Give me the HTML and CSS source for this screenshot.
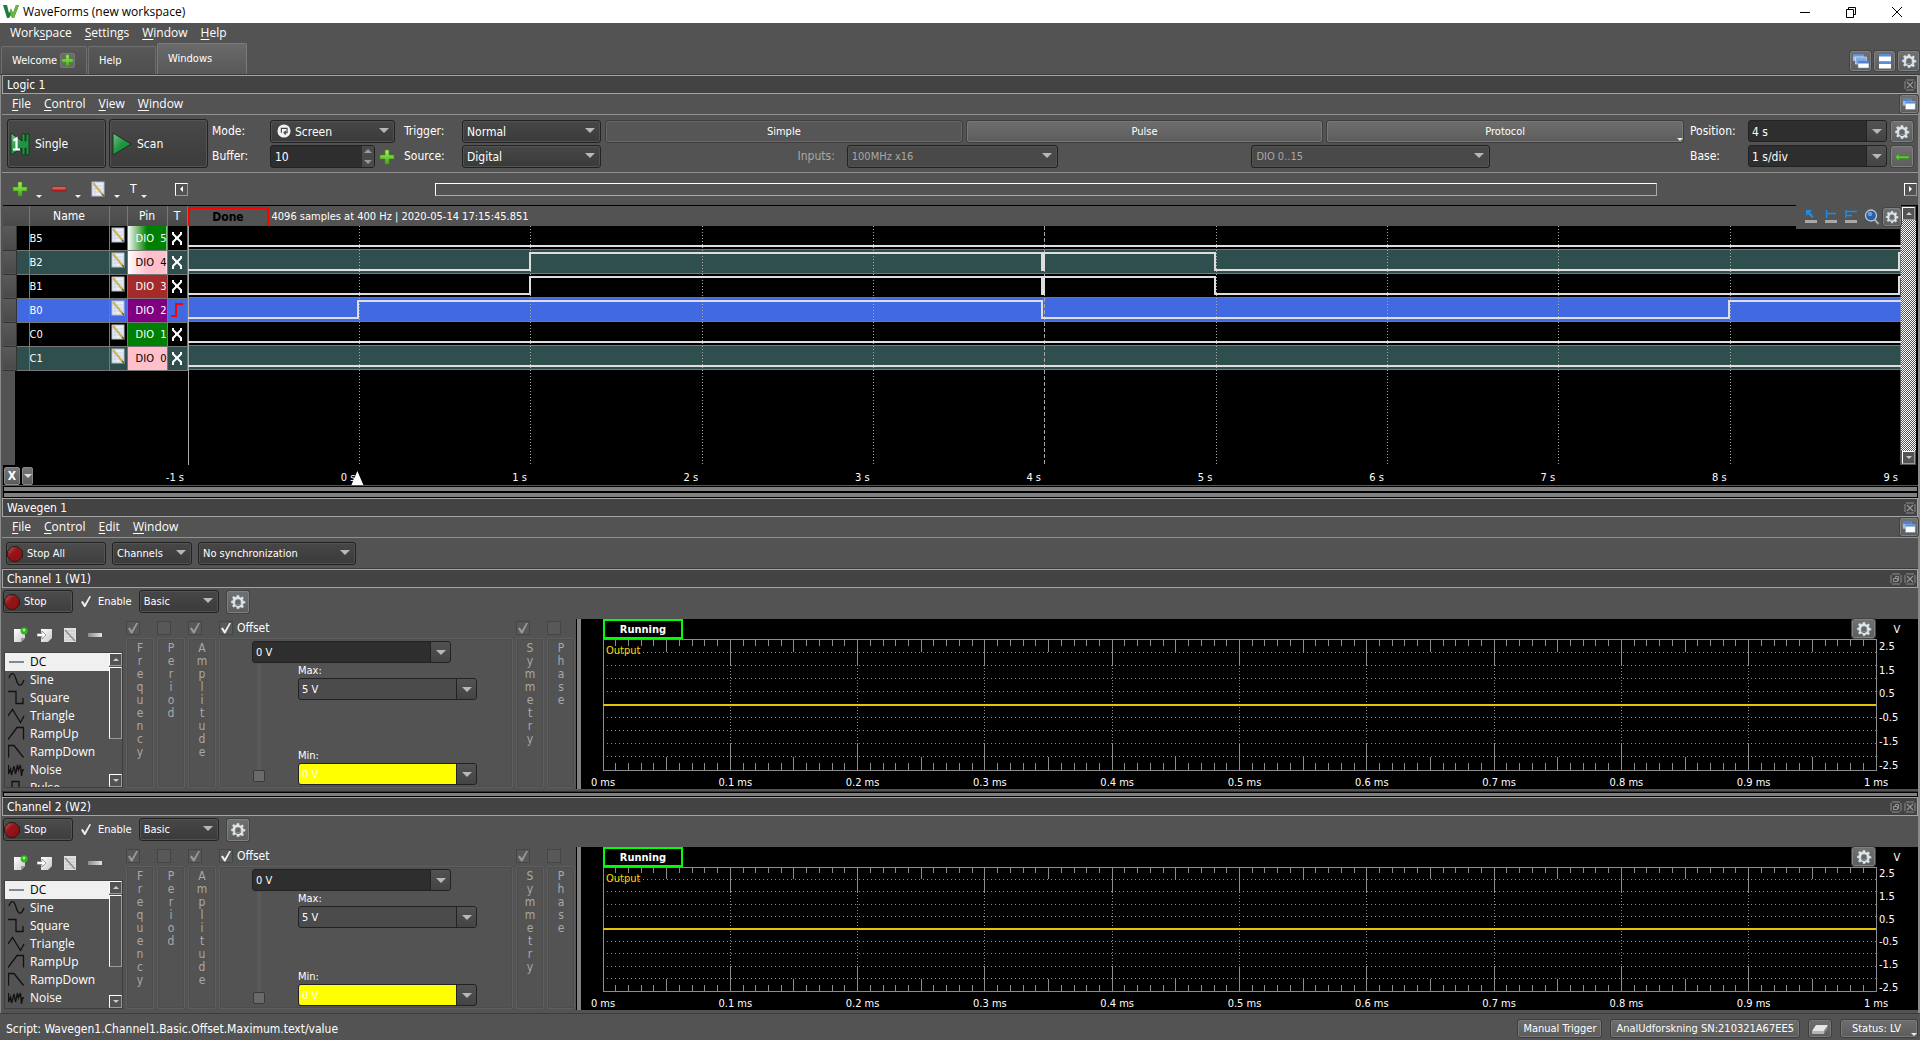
FILE: index.html
```html
<!DOCTYPE html>
<html lang="en">
<head>
<meta charset="utf-8">
<title>WaveForms (new workspace)</title>
<link rel="stylesheet" href="styles.css">
</head>
<body>
<svg class="sprite" aria-hidden="true">
  <defs>
    <linearGradient id="gGreen" x1="0" y1="0" x2="0" y2="1"><stop offset="0" stop-color="#a8f060"/><stop offset="1" stop-color="#3fae12"/></linearGradient>
    <linearGradient id="gRed" x1="0" y1="0" x2="0" y2="1"><stop offset="0" stop-color="#f08080"/><stop offset="1" stop-color="#b01010"/></linearGradient>
    <linearGradient id="gGrey" x1="0" y1="0" x2="1" y2="1"><stop offset="0" stop-color="#ffffff"/><stop offset="1" stop-color="#c8c8c8"/></linearGradient>
    <linearGradient id="gBar" x1="0" y1="0" x2="1" y2="0"><stop offset="0" stop-color="#8a8a8a"/><stop offset="1" stop-color="#e4e4e4"/></linearGradient>
    <linearGradient id="gPlay" x1="0" y1="0" x2="1" y2="1"><stop offset="0" stop-color="#7dc08a"/><stop offset=".5" stop-color="#1f9440"/><stop offset="1" stop-color="#1f9440"/></linearGradient>
    <linearGradient id="gStop" x1="0" y1="0" x2="1" y2="1"><stop offset="0" stop-color="#c86060"/><stop offset=".4" stop-color="#961418"/><stop offset="1" stop-color="#8a0f14"/></linearGradient>
    <linearGradient id="gWin" x1="0" y1="0" x2="0" y2="1"><stop offset="0" stop-color="#4f83cc"/><stop offset=".35" stop-color="#9fbfe8"/><stop offset=".4" stop-color="#ffffff"/><stop offset="1" stop-color="#e6eefa"/></linearGradient>
  </defs>
  <symbol id="plus" viewBox="0 0 16 16"><path d="M6 1h4v5h5v4h-5v5H6v-5H1V6h5z" fill="url(#gGreen)" stroke="#3a8a18" stroke-width=".6"/></symbol>
  <symbol id="minus" viewBox="0 0 16 16"><rect x="1" y="6" width="14" height="4" rx="1" fill="url(#gRed)" stroke="#8a1010" stroke-width=".5"/></symbol>
  <symbol id="note" viewBox="0 0 16 16"><rect x="2" y="1" width="12" height="14" fill="#e8eef8" stroke="#b4bccb"/><path d="M3 5h10M3 8h10M3 11h10M5 2v12" stroke="#b8c8e4" stroke-width=".7"/><path d="M3 2l10 12" stroke="#d0b050" stroke-width="2"/><path d="M12 13l2 2" stroke="#555" stroke-width="1.2"/></symbol>
  <symbol id="gear" viewBox="0 0 16 16"><path fill-rule="evenodd" fill="#dfe5e8" stroke="#7c8a92" stroke-width=".4" d="M6.900 1h2.200l.4 1.900 1.300.5 1.600-1 1.500 1.500-1 1.700.5 1.200 1.900.4v2.100l-1.900.5-.5 1.200 1 1.700-1.500 1.500-1.600-1-1.300.5L9.100 15H6.900l-.4-1.900-1.300-.5-1.600 1-1.500-1.500 1-1.700-.5-1.200L1 9V7l1.600-.5.5-1.200-1-1.700 1.500-1.500 1.600 1 1.300-.5zM8 5.200a2.800 2.800 0 1 0 0 5.600 2.800 2.800 0 0 0 0-5.600z"/><path d="M5 9.500a3.200 3.200 0 0 0 6 0" fill="none" stroke="#4a6068" stroke-width=".9"/></symbol>
  <symbol id="cascade" viewBox="0 0 16 16"><rect x="0" y="1" width="11" height="7" fill="url(#gWin)"/><path d="M0 1h11v7H0z" fill="#5b8bd0" opacity=".55"/><rect x="2.500" y="4" width="11" height="7" fill="#86abdf" stroke="#dfe9f8" stroke-width=".6"/><rect x="5" y="8" width="11" height="7" fill="#fff" stroke="#6a95d0" stroke-width=".6"/><rect x="5" y="8" width="11" height="2.500" fill="#4f83cc"/></symbol>
  <symbol id="tile" viewBox="0 0 16 16"><rect x="2" y="1" width="12" height="7" fill="#fff"/><rect x="2" y="1" width="12" height="2.500" fill="#5b8ed6"/><rect x="2" y="8.500" width="12" height="7" fill="#fff"/><rect x="2" y="8.500" width="12" height="2.500" fill="#5b8ed6"/></symbol>
  <symbol id="windows" viewBox="0 0 16 16"><rect x="1" y="2" width="10" height="8" fill="#9fbce6"/><rect x="1" y="2" width="10" height="2.500" fill="#4f83cc"/><rect x="4" y="5" width="11" height="9" fill="#fff" stroke="#7fa4da" stroke-width=".6"/><rect x="4" y="5" width="11" height="2.500" fill="#5b8ed6"/></symbol>
  <symbol id="close" viewBox="0 0 12 12"><rect x="1" y="1" width="10" height="10" fill="none" stroke="#8c8c8c" stroke-dasharray="8 2" stroke-dashoffset="-1"/><path d="M3 3l6 6M9 3l-6 6" stroke="#949494" stroke-width="1.300"/></symbol>
  <symbol id="float" viewBox="0 0 12 12"><rect x="1" y="1" width="10" height="10" fill="none" stroke="#8c8c8c" stroke-dasharray="8 2" stroke-dashoffset="-1"/><path d="M3.500 5.500h4v3h-4zM5.500 5.500v-2h3v4h-1" fill="none" stroke="#949494"/></symbol>
  <symbol id="stop" viewBox="0 0 16 16"><path d="M5 .7h6L15.300 5v6L11 15.300H5L.7 11V5z" fill="url(#gStop)" stroke="#1c1c1c"/></symbol>
  <symbol id="repeat" viewBox="0 0 16 16"><circle cx="8" cy="8" r="7.500" fill="#f2f2f2"/><path d="M5 10V5h6.500v5H8.500M10 8l-2 2 2 2" fill="none" stroke="#444" stroke-width="1.300"/></symbol>
  <symbol id="arrow" viewBox="0 0 16 16"><path d="M1 8l4-3.500V7h10v2.500H5V12z" fill="#63c43a" stroke="#2e8a18" stroke-width=".5"/></symbol>
  <symbol id="newdoc" viewBox="0 0 16 16"><path d="M2 2h11v9l-4 4H2z" fill="url(#gGrey)"/><path d="M13 11H9v4z" fill="#9a9a9a"/><circle cx="12.200" cy="3.800" r="3.600" fill="#2eb41c"/><circle cx="12" cy="3" r="1.500" fill="#9df08a"/></symbol>
  <symbol id="import" viewBox="0 0 16 16"><path d="M4 2h11v9l-4 4H4z" fill="url(#gGrey)"/><path d="M0 6.500h5V4l4 4-4 4V9.500H0z" fill="#fff" stroke="#777" stroke-width=".7"/></symbol>
  <symbol id="edit" viewBox="0 0 16 16"><path d="M2 1h12v14H2z" fill="#e0e0e0"/><path d="M3 4h10M3 7h10M3 10h10M3 13h10" stroke="#c4c4c4"/><path d="M3 3l10 11" stroke="#8e8e8e" stroke-width="1.500"/></symbol>
  <symbol id="bar" viewBox="0 0 16 16"><rect x="1" y="6" width="14" height="4" fill="url(#gBar)"/></symbol>
  <symbol id="cursor" viewBox="0 0 14 14"><path d="M1 10h12v3H1z" fill="#a8a8a8"/><path d="M2 0h6L6 2l4 5-2 1-4-4-2 2z" fill="#1e8be6"/></symbol>
  <symbol id="meas1" viewBox="0 0 14 14"><path d="M1 10h12v3H1z" fill="#a8a8a8"/><path d="M2.500 0v8M3 3.500h9" stroke="#1e8be6" stroke-width="1.500"/></symbol>
  <symbol id="meas2" viewBox="0 0 14 14"><path d="M1 10h12v3H1z" fill="#a8a8a8"/><path d="M2 0v8M2 1.500h11M2 5.500h6" stroke="#1e8be6" stroke-width="1.500"/></symbol>
  <symbol id="lens" viewBox="0 0 16 16"><path d="M10.500 10.500l4 4.500" stroke="#a8a8a8" stroke-width="2"/><circle cx="7" cy="6.500" r="5.500" fill="#2c5fa8" stroke="#b8c8d8" stroke-width="1.300"/><circle cx="6" cy="5" r="2.300" fill="#6f9cd8"/></symbol>
  <symbol id="eraser" viewBox="0 0 18 12"><path d="M5 2h12l-4 6H1z" fill="#e6e6e6"/><path d="M1 8h12v3H1z" fill="#b4b4b4"/><path d="M13 8l4-6v3l-4 6z" fill="#8a8a8a"/></symbol>
  <symbol id="w-dc" viewBox="0 0 18 18"><path d="M1 9h15" stroke="#4c5c78" stroke-width="1.400"/></symbol>
  <symbol id="w-sine" viewBox="0 0 18 18"><path d="M1 7C3 1 6 1 8 8s5 9 8 1" fill="none" stroke="#111" stroke-width="1.300"/></symbol>
  <symbol id="w-square" viewBox="0 0 18 18"><path d="M0 2.500h8v12h7V9" fill="none" stroke="#111" stroke-width="1.300"/></symbol>
  <symbol id="w-tri" viewBox="0 0 18 18"><path d="M0 9l4.500-6.500 8 13L16 9" fill="none" stroke="#111" stroke-width="1.300"/></symbol>
  <symbol id="w-up" viewBox="0 0 18 18"><path d="M0 14.500L9 2.500h6.500v12" fill="none" stroke="#111" stroke-width="1.300"/></symbol>
  <symbol id="w-down" viewBox="0 0 18 18"><path d="M.5 14.500v-12H6l9.500 12" fill="none" stroke="#111" stroke-width="1.300"/></symbol>
  <symbol id="w-noise" viewBox="0 0 18 18"><path d="M.5 4v9l2-5 1 6L6 5l1.500 8 2-9 1 5 2-5 1 11 1-6h1.500" fill="none" stroke="#111" stroke-width="1.300"/></symbol>
  <symbol id="w-pulse" viewBox="0 0 18 18"><path d="M0 14h4V2.500h7V14h5" fill="none" stroke="#111" stroke-width="1.300"/></symbol>
</svg>

<header class="titlebar">
  <svg class="logo" viewBox="0 0 16 14"><path d="M0 0h4l2 8 2-4 2 4 3-8h3l-5 13H9L8 10l-2 3H4z" fill="#1d7d3c"/><path d="M8 3l2 5 3-8h3l-5 13H9L7 7z" fill="#6db33f"/></svg>
  <span class="grow">WaveForms (new workspace)</span>
  <button class="win" aria-label="Minimize"><svg viewBox="0 0 12 12"><path d="M1 6.500h10" stroke="#000"/></svg></button>
  <button class="win" aria-label="Restore"><svg viewBox="0 0 12 12"><path d="M1.500 3.500h7v8h-7zM3.500 3.500v-2h7v7h-2" fill="none" stroke="#000"/></svg></button>
  <button class="win" aria-label="Close"><svg viewBox="0 0 12 12"><path d="M1 1l10 10M11 1L1 11" stroke="#000"/></svg></button>
</header>

<nav class="menu main"><a href="#">Work<u>s</u>pace</a><a href="#"><u>S</u>ettings</a><a href="#"><u>W</u>indow</a><a href="#"><u>H</u>elp</a></nav>

<div class="tabs">
  <button class="tab welcome">Welcome <span class="addtab"><svg><use href="#plus"/></svg></span></button>
  <button class="tab help">Help</button>
  <button class="tab active">Windows</button>
  <span class="grow"></span>
  <button class="tool" aria-label="Cascade"><svg><use href="#cascade"/></svg></button>
  <button class="tool" aria-label="Tile"><svg><use href="#tile"/></svg></button>
  <button class="tool" aria-label="Settings"><svg><use href="#gear"/></svg></button>
</div>

<main class="workspace">
  <section class="logic">
    <h2 class="dock"><span class="grow">Logic 1</span><svg><use href="#close"/></svg></h2>
    <nav class="menu"><a href="#"><u>F</u>ile</a><a href="#"><u>C</u>ontrol</a><a href="#"><u>V</u>iew</a><a href="#"><u>W</u>indow</a><span class="grow"></span><button class="tool small" aria-label="Windows"><svg><use href="#windows"/></svg></button></nav>

    <div class="toolbar">
      <button class="run"><svg viewBox="0 0 20 24"><path d="M1 1l11 8V2h3v7l1 0V2h3v21h-3v-7h-1v7h-3v-7L1 23z" fill="url(#gPlay)" stroke="#14381c"/><path d="M3.500 8.500l3-2V17M3 17.500h7" fill="none" stroke="#fff" stroke-width="2.200"/></svg>Single</button>
      <button class="run"><svg viewBox="0 0 20 24"><path d="M1 1l18 11L1 23z" fill="url(#gPlay)" stroke="#14381c"/></svg>Scan</button>
      <div class="stack mode">
        <label for="mode">Mode:</label>
        <span class="pick icon"><svg><use href="#repeat"/></svg><select id="mode"><option>Screen</option></select></span>
        <label for="buffer">Buffer:</label>
        <span class="buffer"><span class="spin"><input id="buffer" value="10"><span class="steps"><button aria-label="Up"></button><button aria-label="Down"></button></span></span><button class="bare" aria-label="Add buffer"><svg><use href="#plus"/></svg></button></span>
      </div>
      <div class="stack trig">
        <label for="trigger">Trigger:</label><span class="pick"><select id="trigger"><option>Normal</option></select></span>
        <label for="source">Source:</label><span class="pick"><select id="source"><option>Digital</option></select></span>
      </div>
      <div class="types">
        <div class="three"><button class="flat on">Simple</button><button class="flat">Pulse</button><button class="flat more">Protocol</button></div>
        <div class="inputs"><label for="inputs">Inputs:</label><span class="pick off"><select id="inputs" disabled><option>100MHz x16</option></select></span><span></span><span class="pick off"><select disabled aria-label="Input pins"><option>DIO 0..15</option></select></span></div>
      </div>
      <div class="stack pos">
        <label for="position">Position:</label><span class="combo"><input id="position" value="4 s"><button aria-label="Choose position"></button></span><button class="tool" aria-label="Settings"><svg><use href="#gear"/></svg></button>
        <label for="base">Base:</label><span class="combo"><input id="base" value="1 s/div"><button aria-label="Choose base"></button></span><button class="tool" aria-label="Back"><svg><use href="#arrow"/></svg></button>
      </div>
    </div>

    <div class="scroller">
      <button class="bare drop" aria-label="Add"><svg><use href="#plus"/></svg></button>
      <button class="bare drop" aria-label="Remove"><svg><use href="#minus"/></svg></button>
      <button class="bare drop" aria-label="Edit"><svg><use href="#note"/></svg></button>
      <button class="bare drop t">T</button>
      <button class="nudge left" aria-label="Scroll left"></button>
      <span class="track"><span class="thumb"></span></span>
      <button class="nudge right" aria-label="Scroll right"></button>
    </div>

    <div class="analyzer">
      <table class="signals">
        <colgroup><col class="c-head"><col class="c-pad"><col class="c-name"><col class="c-note"><col class="c-pin"><col class="c-t"></colgroup>
        <thead><tr><th colspan="2"></th><th>Name</th><th></th><th>Pin</th><th>T</th></tr></thead>
        <tbody id="signals"></tbody>
      </table>
      <div class="view">
        <div class="info"><strong class="state done">Done</strong><span>4096 samples at 400 Hz | 2020-05-14 17:15:45.851</span></div>
        <svg class="waves" id="waves"></svg>
        <div class="overlay">
          <svg><use href="#cursor"/></svg><svg><use href="#meas1"/></svg><svg><use href="#meas2"/></svg><svg class="lens"><use href="#lens"/></svg>
          <button class="tool small" aria-label="Plot settings"><svg><use href="#gear"/></svg></button>
        </div>
      </div>
      <div class="vscroll"><button class="nudge up" aria-label="Scroll up"></button><span class="dither"></span><button class="nudge down" aria-label="Scroll down"></button></div>
    </div>
    <div class="axis"><span class="marks"><button class="x">X</button><button class="xdrop" aria-label="Add cursor"></button></span><svg id="times"></svg></div>
  </section>
  <div class="split"></div>
  <div class="split"></div>

  <section>
    <h2 class="dock"><span class="grow">Wavegen 1</span><svg><use href="#close"/></svg></h2>
    <nav class="menu"><a href="#"><u>F</u>ile</a><a href="#"><u>C</u>ontrol</a><a href="#"><u>E</u>dit</a><a href="#"><u>W</u>indow</a><span class="grow"></span><button class="tool small" aria-label="Windows"><svg><use href="#windows"/></svg></button></nav>
    <div class="genbar">
      <button class="stop all"><svg><use href="#stop"/></svg>Stop All</button>
      <span class="pick channels"><select aria-label="Channels"><option>Channels</option></select></span>
      <span class="pick sync"><select aria-label="Synchronization"><option>No synchronization</option></select></span>
    </div>
    <div id="channels"></div>
  </section>
</main>

<footer class="status">
  <span class="grow">Script: Wavegen1.Channel1.Basic.Offset.Maximum.text/value</span>
  <button class="flat">Manual Trigger</button>
  <button class="flat">AnalUdforskning SN:210321A67EE5</button>
  <button class="flat eraser" aria-label="Clear"><svg><use href="#eraser"/></svg></button>
  <button class="flat more">Status: LV</button>
</footer>
<script src="app.js"></script>
</body>
</html>
```
FILE: styles.css
```css
* { box-sizing: border-box; }
body {
  margin: 0;
  min-height: 100vh;
  display: flex;
  flex-direction: column;
  background: #535353;
  color: #fff;
  font: 12px/16px "DejaVu Sans Condensed", "Noto Sans", sans-serif;
}
button, input, select { font: inherit; color: inherit; margin: 0; padding: 0; border: 0; background: none; min-width: 0; }
svg { display: block; width: 16px; height: 16px; flex: none; }
.sprite { position: absolute; width: 0; height: 0; }
.grow { flex: 1; }
a { color: inherit; text-decoration: none; }
u { text-underline-offset: 2px; }

/* window frame */
.titlebar { display: flex; align-items: center; height: 23px; background: #fff; color: #000; padding: 0 2px 0 3px; gap: 4px; font-family: "Open Sans", sans-serif; }
.titlebar .logo { height: 14px; }
.win { width: 42px; height: 20px; display: grid; place-items: center; }
.win svg { width: 12px; height: 12px; }
.menu { display: flex; align-items: center; gap: 13px; height: 21px; padding-left: 10px; border-bottom: 1px solid #919191; font-family: "Open Sans", sans-serif; }
.menu.main { border: 0; height: 20px; }
.tabs { display: flex; align-items: flex-end; height: 32px; padding: 0 1px; border-bottom: 1px solid #3c3c3c; gap: 1px; }
.tab { display: flex; align-items: center; gap: 3px; height: 28px; padding-left: 10px; border: 1px solid #6e6e6e; border-bottom: 0; border-radius: 2px 2px 0 0; background: linear-gradient(#585858, #4e4e4e); font-size: 11px; }
.welcome { width: 86px; }
.help { width: 68px; }
.tab.active { width: 90px; height: 31px; background: linear-gradient(#6a6a6a, #585858); border-color: #7a7a7a; }
.addtab { background: #6a6a6a; border: 1px solid #777; border-radius: 2px; }
.addtab svg { width: 13px; height: 13px; }
.tool { width: 22px; height: 22px; display: grid; place-items: center; flex: none; border: 1px solid #808080; border-radius: 2px; background: linear-gradient(#707070, #5e5e5e); outline: 1px solid #434343; }
.tabs .tool { width: 21px; height: 20px; margin-bottom: 3px; margin-left: 2px; }
.tool.small { height: 18px; width: 18px; }
.tool.small svg { width: 14px; height: 14px; }
.workspace { flex: 1; border: 1px solid #8a8a8a; border-width: 0 2px 0 1px; padding: 0 0 0 1px; }
.dock { display: flex; align-items: center; gap: 2px; height: 19px; margin: 0; padding: 0 1px 0 4px; border: 1px solid #a4a4a4; background: #434343; font: inherit; }
.dock svg { width: 12px; height: 12px; }

/* shared controls */
.pick { position: relative; display: flex; height: 23px; border: 1px solid #222; border-radius: 3px; background: linear-gradient(#474747, #3a3a3a); box-shadow: inset 0 0 0 1px #525252; }
.pick select { appearance: none; width: 100%; padding: 1px 18px 0 4px; outline: 0; }
.pick::after { content: ""; position: absolute; right: 5px; top: 7px; border: 5px solid transparent; border-top-color: #b8b8b8; border-bottom: 0; pointer-events: none; }
.pick.icon svg { width: 14px; height: 14px; margin: 3px 0 0 6px; }
.pick.off { color: #a8a8a8; background: #494949; }
.pick select:disabled { opacity: 1; color: #a8a8a8; }
.combo { display: flex; height: 22px; border: 1px solid #222; border-radius: 3px; background: #2e2e2e; overflow: hidden; }
.combo input { flex: 1; width: 0; padding: 1px 3px 0; }
.combo button { width: 20px; display: grid; place-items: center; border-left: 1px solid #222; background: linear-gradient(#525252, #444); }
.combo button::after { content: ""; border: 5px solid transparent; border-top-color: #b8b8b8; border-bottom: 0; }
.combo.light { background: #4b4b4b; }
.combo.warn input { background: #ff0; }
.flat { height: 23px; border: 1px solid #3e3e3e; border-radius: 3px; background: linear-gradient(#6e6e6e, #5c5c5c); box-shadow: inset 0 0 0 1px #787878; position: relative; font-size: 11px; }
.flat.on { background: #565656; box-shadow: inset 0 0 0 1px #676767; }
.more::after, .drop::after { content: ""; position: absolute; right: 0; bottom: 1px; border: 3px solid transparent; border-top-color: #eee; border-bottom: 0; }
.bare { display: grid; place-items: center; position: relative; }

/* logic toolbar */
.toolbar { display: flex; gap: 3px; height: 58px; padding: 4px 5px; border-bottom: 1px solid #919191; }
.run { width: 99px; height: 49px; display: flex; align-items: center; gap: 5px; padding-left: 2px; border: 1px solid #222; border-radius: 3px; background: linear-gradient(#484848, #3c3c3c); box-shadow: inset 0 0 0 1px #555; }
.run svg { width: 20px; height: 24px; }
.stack { display: grid; grid-template-rows: 23px 23px; row-gap: 2px; padding-top: 1px; }
.stack label { line-height: 22px; }
.mode { grid-template-columns: 58px 125px; padding-left: 1px; }
.buffer { display: flex; gap: 4px; }
.spin { display: flex; width: 105px; height: 23px; border: 1px solid #222; border-radius: 3px; background: #2e2e2e; }
.spin input { flex: 1; width: 0; padding: 1px 0 0 4px; }
.steps { width: 12px; display: grid; grid-template-rows: 1fr 1fr; background: #4a4a4a; }
.steps button { display: grid; place-items: center; }
.steps button::after { content: ""; border: 4px solid transparent; border-top-color: #999; border-bottom: 0; }
.steps button:first-child::after { border-top: 0; border-bottom: 4px solid #999; }
.trig { grid-template-columns: 58px 139px; padding-left: 6px; }
.types { flex: 1; padding-top: 1px; display: grid; grid-template-rows: 23px 23px; row-gap: 2px; margin-left: 1px; }
.three { display: grid; grid-template-columns: 1fr 1fr 1fr; gap: 3px; }
.inputs { display: grid; grid-template-columns: 241fr 211px 193fr 239px 193fr; color: #a8a8a8; }
.inputs label { text-align: right; padding-right: 12px; line-height: 22px; }
.inputs .pick { font-size: 11px; }
.pos { grid-template-columns: 58px 139px 26px; padding-left: 3px; }
.pos .tool { margin-left: 4px; height: 21px; margin-top: 1px; }

.scroller { display: flex; align-items: center; height: 32px; padding: 0 1px 0 10px; }
.bare.drop { width: 30px; height: 20px; margin-right: 9px; justify-items: start; }
.bare.t { width: 18px; padding-left: 1px; margin-right: 28px; }
.nudge { width: 13px; height: 13px; flex: none; display: grid; place-items: center; border: 1px solid #fff; border-right-color: #999; border-bottom-color: #999; }
.nudge::after { content: ""; border: 3px solid transparent; }
.left::after { border-right-color: #fff; border-left: 0; }
.right::after { border-left-color: #fff; border-right: 0; }
.up::after { border-bottom-color: #ccc; border-top: 0; }
.down::after { border-top-color: #ccc; border-bottom: 0; }
.track { flex: 1; }
.thumb { display: block; width: 71.2%; margin-left: 14.4%; height: 13px; border: 1px solid #fff; border-right-color: #aaa; border-bottom-color: #aaa; }

/* analyzer */
.analyzer { display: flex; background: linear-gradient(90deg, #535353 12px, #000 12px); border-top: 1px solid #000; margin-left: 1px; height: 260px; }
.signals { width: 184px; flex: none; table-layout: fixed; border-collapse: collapse; height: max-content; }
.c-head { width: 13px; } .c-pad { width: 13px; } .c-name { width: 80px; } .c-note { width: 18px; } .c-pin { width: 40px; } .c-t { width: 20px; }
.signals th { height: 20px; padding: 0; font-weight: normal; background: linear-gradient(#555, #4a4a4a); border-right: 1px solid #777; }
.signals td { height: 24px; padding: 0; border-right: 1px solid #777; border-bottom: 1px solid #777; white-space: nowrap; overflow: hidden; }
.signals td:first-child { background: linear-gradient(#5a5a5a, #4a4a4a); border-right-color: #333; border-bottom-color: #333; }
.signals td:nth-child(3) { padding-top: 2px; font-size: 11px; }
.signals .note svg { margin: 0 auto 5px; }
.signals .pin { text-align: right; padding-top: 2px; white-space: pre; font-size: 11px; }
.signals .trg svg { width: 14px; margin: 0 auto; }
.view { flex: 1; position: relative; min-width: 0; }
.info { height: 20px; display: flex; align-items: center; gap: 3px; background: #535353; font-size: 11px; padding-top: 1px; }
.state { width: 80px; height: 20px; border: 2px solid #0f0; text-align: center; line-height: 18px; background: #000; font-size: 11px; }
.state.done { width: 81px; border-color: #f00; color: #000; background: #535353; font-size: 12px; line-height: 16px; }
.waves { width: 100%; height: 239px; }
.overlay { position: absolute; top: -1px; right: 0; height: 24px; width: 105px; display: flex; align-items: center; gap: 6px; padding-left: 8px; background: #535353; }
.overlay > svg { width: 14px; height: 14px; }
.overlay .lens { width: 16px; height: 16px; }
.overlay .tool { margin-left: -3px; }
.vscroll { width: 15px; display: flex; flex-direction: column; align-items: center; background: #535353; padding: 1px 0; margin-right: 2px; }
.dither { flex: 1; width: 100%; background: conic-gradient(#fff 25%, #535353 0 50%, #fff 0 75%, #535353 0) 0 0 / 2px 2px; }
.axis { display: flex; height: 21px; margin-left: 1px; padding-right: 17px; background: #000; border-bottom: 1px solid #555; }
.marks { width: 184px; display: flex; gap: 2px; padding: 2px 0 0 1px; }
.marks button { height: 18px; background: linear-gradient(#777, #5c5c5c); border: 1px solid #888; border-radius: 2px; font-weight: bold; display: grid; place-items: center; line-height: 14px; }
.x { width: 16px; }
.xdrop { width: 11px; }
.xdrop::after { content: ""; border: 4px solid transparent; border-top-color: #ddd; border-bottom: 0; }
.axis > svg { flex: 1; height: 20px; overflow: visible; }
svg text { fill: #fff; font-size: 11px; }
.split { height: 6px; background: #808080; border: 1px solid #000; margin-left: 1px; }
.split.thin { height: 5px; }

/* wavegen */
.genbar { display: flex; gap: 6px; height: 31px; padding: 4px; border-bottom: 1px solid #3c3c3c; }
.stop { display: flex; align-items: center; gap: 4px; height: 23px; border: 1px solid #222; border-radius: 3px; background: linear-gradient(#4c4c4c, #3e3e3e); box-shadow: inset 0 0 0 1px #555; width: 70px; font-size: 11px; }
.stop.all { width: 100px; }
.channels { width: 80px; }
.sync { width: 158px; }
.genbar .pick, .controls { font-size: 11px; }
.controls { display: flex; align-items: center; height: 31px; padding: 0 0 4px 1px; }
.controls .pick { width: 80px; margin: 0 8px 0 7px; }
.controls .tool { width: 22px; }
.check { display: flex; align-items: center; gap: 4px; }
.check input { appearance: none; width: 14px; height: 14px; border: 1px solid #454545; background: #585858; display: grid; place-items: center; flex: none; }
.check input:checked::after { content: ""; width: 10px; height: 11px; background: #eee; clip-path: polygon(0 55%, 18% 45%, 38% 72%, 85% 0, 100% 5%, 44% 100%, 32% 100%); }
.check input:disabled:checked::after { background: #9a9a9a; }
.enable { margin-left: 6px; gap: 5px; }
.enable input { border-color: transparent; background: none; }
.panel { display: flex; height: 170px; }
.two .panel { height: 163px; }
.lib { width: 121px; display: flex; flex-direction: column; padding: 8px 0 1px 2px; }
.icons { display: flex; gap: 9px; padding-left: 8px; height: 25px; }
.listbox { flex: 1; min-height: 0; display: flex; border: 1px solid #3e3e3e; border-top-color: #444; overflow: hidden; }
.listbox ul { flex: 1; margin: 0; padding: 0; list-style: none; height: 0; }
.listbox li { height: 18px; display: flex; align-items: center; gap: 4px; padding-left: 3px; line-height: 18px; font-family: "Open Sans", sans-serif; font-size: 12px; white-space: nowrap; }
.listbox li:first-child { background: #f0f0f0; color: #000; }
.listbox li svg { width: 18px; height: 18px; }
.bars { display: flex; flex-direction: column; width: 13px; gap: 1px; }
.bars .hold { height: 72px; border: 1px solid #fff; border-right-color: #999; border-bottom-color: #999; }
.bars .down { margin-top: auto; }
.group { width: 28px; margin-left: 3px; padding: 2px 0 1px; display: flex; flex-direction: column; gap: 3px; }
.group .check { height: 14px; }
.group .box { flex: 1; min-height: 0; border: 1px solid #5e5e5e; border-radius: 2px; outline: 1px solid #4d4d4d; outline-offset: -2px; }
.group .tall { text-align: center; color: #a8a8a8; line-height: 13px; padding-top: 3px; }
.offset { width: 294px; }
.offset .check { font-size: 12px; line-height: 18px; }
.offset .box { display: flex; flex-direction: column; padding: 2px 35px 2px 32px; }
.offset .combo { flex: none; font-size: 11px; }
.offset .main { width: 199px; }
.offset .range { flex: 1; min-height: 0; display: flex; padding: 1px 0 0; }
.offset input[type=range] { appearance: none; writing-mode: vertical-lr; direction: rtl; width: 14px; margin-right: 32px; height: auto; min-height: 0; block-size: 14px; inline-size: auto; max-height: 118px; background: linear-gradient(#5a5a5a, #5a5a5a) center / 4px 100% no-repeat; }
.two .offset input[type=range] { max-height: 112px; }
.offset input[type=range]::-webkit-slider-thumb { appearance: none; width: 12px; height: 12px; border: 1px solid #3a3a3a; border-radius: 2px; background: #6a6a6a; }
.limits { flex: 1; display: flex; flex-direction: column; justify-content: space-between; }
.limits label { display: block; line-height: 14px; font-size: 11px; }
.limits .combo { width: 179px; }
.scope { flex: 1; margin-left: 1px; min-width: 0; background: #000; border-left: 1px solid #000; display: grid; grid-template-columns: 26px 1fr 42px; grid-template-rows: 20px minmax(0, 1fr) 19px; }
.scope .bar { grid-row: 1 / 4; width: 4px; background: #808080; }
.scope .top { display: flex; justify-content: space-between; }
.scope .top .tool { width: 23px; height: 19px; margin-right: 1px; }
.scope .unit { text-align: center; line-height: 22px; font-size: 11px; }
.scope svg.grid { width: 100%; height: 100%; overflow: visible; }
.scope svg.xs { width: 100%; height: 19px; grid-column: 2; overflow: visible; }
.scope svg.ys { width: 100%; height: 100%; overflow: visible; }
.scope .name { fill: #ffd800; }
.edge { height: 3px; border-bottom: 1px solid #333; }
.two .edge { height: 2px; border: 0; }

.status { display: flex; align-items: center; gap: 8px; height: 27px; border-top: 1px solid #3c3c3c; padding: 3px 2px 0 6px; }
.status .flat { height: 19px; padding: 0 5px; line-height: 15px; display: grid; place-items: center; }
.status .eraser { padding: 0 2px; }
.status .eraser svg { width: 18px; height: 12px; }
.status .more { width: 78px; padding-right: 10px; }
```
FILE: app.js
```js
const pct = v => (v * 100).toFixed(3) + '%';
const line = (x1, y1, x2, y2, extra) => `<line x1="${x1}" y1="${y1}" x2="${x2}" y2="${y2}" ${extra}/>`;

// Logic signals: edges are [position, level after the edge]
const signals = [
  { name: 'B5', pin: 'DIO  5', row: '#000', bg: 'linear-gradient(90deg,#fff,#008000 50%)', fg: '#fff', edges: [] },
  { name: 'B2', pin: 'DIO  4', row: '#2f4f4f', bg: 'linear-gradient(90deg,#fff,#ffc0cb 50%)', fg: '#000', edges: [[.1996, 1], [.4984, 0], [.4995, 1], [.5991, 0], [.9985, 1]] },
  { name: 'B1', pin: 'DIO  3', row: '#000', bg: '#a52a2a', fg: '#fff', edges: [[.1996, 1], [.4984, 0], [.4995, 1], [.5991, 0], [.9985, 1]] },
  { name: 'B0', pin: 'DIO  2', row: '#4169e1', bg: '#800080', fg: '#fff', rise: true, edges: [[.0994, 1], [.4984, 0], [.8993, 1]] },
  { name: 'C0', pin: 'DIO  1', row: '#000', bg: '#008000', fg: '#fff', edges: [] },
  { name: 'C1', pin: 'DIO  0', row: '#2f4f4f', bg: '#ffc0cb', fg: '#000', edges: [] }
];
const cross = '<svg viewBox="0 0 14 16"><path d="M3 2v2l3 3v2l-3 3v3M11 2v2L8 7v2l3 3v3" fill="none" stroke="#fff" stroke-width="2"/></svg>';
const rise = '<svg viewBox="0 0 14 16"><path d="M1 14h5V2h7" fill="none" stroke="#f00" stroke-width="2"/></svg>';
document.getElementById('signals').innerHTML = signals.map(s =>
  `<tr style="background:${s.row}"><td></td><td></td><td>${s.name}</td><td class="note"><svg><use href="#note"/></svg></td>` +
  `<td class="pin" style="background:${s.bg};color:${s.fg}">${s.pin}</td><td class="trg">${s.rise ? rise : cross}</td></tr>`).join('');

let out = '';
signals.forEach((s, i) => {
  out += `<rect x="0" y="${i * 24}" width="100%" height="23" fill="${s.row}"/>` +
    `<rect x="0" y="${i * 24 + 23}" width="100%" height="1" fill="#777"/>`;
});
for (let k = 1; k < 10; k++) {
  out += line(pct(k / 10), 0, pct(k / 10), '100%', `stroke="#a8a8a8" stroke-dasharray="${k === 5 ? '4 2' : '1 2'}" shape-rendering="crispEdges"`);
}
out += '<rect x="0" y="0" width="1" height="100%" fill="#aaa"/><line x1="100%" y1="0" x2="100%" y2="100%" stroke="#aaa" stroke-width="2"/>';
signals.forEach((s, i) => {
  const y = l => i * 24 + (l ? 3 : 20);
  const pen = 'stroke="#dedede" stroke-width="2" stroke-linecap="square" shape-rendering="crispEdges"';
  let x = 0, l = 0;
  [...s.edges, [1, null]].forEach(([to, next]) => {
    out += line(pct(x), y(l), pct(to), y(l), pen);
    if (next !== null) out += line(pct(to), y(0), pct(to), y(1), pen);
    x = to; l = next;
  });
});
document.getElementById('waves').innerHTML = out;

out = '';
for (let k = 0; k <= 10; k++) out += `<text x="${pct(k / 10)}" y="16" dx="-3" text-anchor="end">${k - 1} s</text>`;
out += `<svg x="9.940%" overflow="visible"><path d="M0 6l6 14H-6z" fill="#fff"/></svg>`;
document.getElementById('times').innerHTML = out;

// Wavegen channels
const waves = [['dc', 'DC'], ['sine', 'Sine'], ['square', 'Square'], ['tri', 'Triangle'], ['up', 'RampUp'], ['down', 'RampDown'], ['noise', 'Noise'], ['pulse', 'Pulse']];
const group = (name, on) => `<div class="group"><span class="check"><input type="checkbox" disabled aria-label="${name}" ${on ? 'checked' : ''}></span><div class="box tall">${[...name].join('<br>')}</div></div>`;
const combo = (id, value, cls) => `<span class="combo ${cls}"><input id="${id}" aria-label="${id}" value="${value}"><button aria-label="Choose"></button></span>`;

function grid() {
  const c = 'stroke="#8c8c8c" shape-rendering="crispEdges"';
  const d = c + ' stroke-dasharray="1 3"';
  let g = '';
  for (let k = 1; k < 10; k++) {
    g += line(0, pct(k / 10), '100%', pct(k / 10), d) + line(pct(k / 10), '20%', pct(k / 10), '80%', c + ' stroke-dasharray="1 2"');
  }
  for (let k = 1; k < 100; k++) {
    const h = k % 10 === 0 ? .2 : k % 5 === 0 ? .1 : .05;
    g += line(pct(k / 100), 0, pct(k / 100), pct(h), c) + line(pct(k / 100), pct(1 - h), pct(k / 100), '100%', c);
  }
  g += `<rect width="100%" height="100%" fill="none" ${c}/>`;
  g += '<text class="name" x="3" y="15">Output</text>';
  return g + line(0, '50%', '100%', '50%', 'stroke="#e6c200" stroke-width="2" shape-rendering="crispEdges"');
}

document.getElementById('channels').innerHTML = [1, 2].map(n => {
  let xs = '', ys = '';
  for (let k = 0; k <= 10; k++) xs += `<text x="${pct(k / 10)}" y="16" dx="${k % 10 ? 5 : 0}" text-anchor="middle">${k % 10 ? '0.' + k : k / 10} ms</text>`;
  for (let k = 0; k < 6; k++) ys += `<text x="3" y="${pct(.05 + k * .183)}" dy="4">${(2.5 - k).toFixed(1)}</text>`;
  return `<section class="${n === 2 ? 'two' : 'one'}">
    <h2 class="dock"><span class="grow">Channel ${n} (W${n})</span><svg><use href="#float"/></svg><svg><use href="#close"/></svg></h2>
    <div class="controls"><button class="stop"><svg><use href="#stop"/></svg>Stop</button>
      <label class="check enable"><input type="checkbox" checked>Enable</label>
      <span class="pick"><select aria-label="Mode"><option>Basic</option></select></span>
      <button class="tool" aria-label="Channel settings"><svg><use href="#gear"/></svg></button></div>
    <div class="panel">
      <div class="lib"><div class="icons">${['newdoc', 'import', 'edit', 'bar'].map(i => `<svg><use href="#${i}"/></svg>`).join('')}</div>
        <div class="listbox"><ul>${waves.map(w => `<li><svg><use href="#w-${w[0]}"/></svg>${w[1]}</li>`).join('')}</ul>
        <div class="bars"><button class="nudge up" aria-label="Scroll up"></button><span class="hold"></span><button class="nudge down" aria-label="Scroll down"></button></div></div></div>
      ${group('Frequency', 1)}${group('Period', 0)}${group('Amplitude', 1)}
      <div class="group offset"><label class="check"><input type="checkbox" checked>Offset</label>
        <div class="box">${combo('offset' + n, '0 V', 'main')}
          <div class="range"><input type="range" value="0" aria-label="Offset level">
            <div class="limits"><div><label for="max${n}">Max:</label>${combo('max' + n, '5 V', 'light')}</div><div><label for="min${n}">Min:</label>${combo('min' + n, '0 V', 'warn')}</div></div></div></div></div>
      ${group('Symmetry', 1)}${group('Phase', 0)}
      <div class="scope"><span class="bar"></span><div class="top"><strong class="state">Running</strong><button class="tool" aria-label="Plot settings"><svg><use href="#gear"/></svg></button></div><span class="unit">V</span>
        <svg class="grid">${grid()}</svg><svg class="ys">${ys}</svg><svg class="xs">${xs}</svg></div>
    </div><div class="edge"></div>${n === 1 ? '<div class="split thin"></div>' : ''}</section>`;
}).join('');
```
